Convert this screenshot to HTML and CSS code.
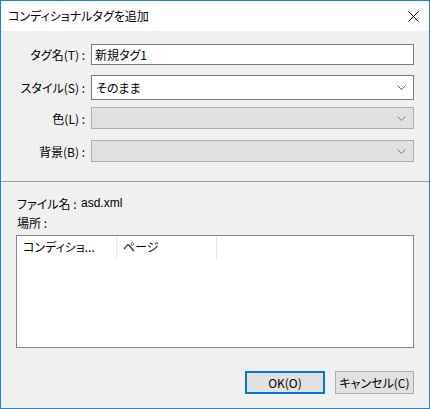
FILE: index.html
```html
<!DOCTYPE html>
<html lang="ja">
<head>
<meta charset="utf-8">
<title>コンディショナルタグを追加</title>
<link rel="stylesheet" href="styles.css">
</head>
<body>
<div class="window">
  <div class="titlebar">
    <span class="title">コンディショナルタグを追加</span>
    <svg class="close" width="11" height="11" viewBox="0 0 11 11"><path d="M0.5 0.5 L10.5 10.5 M10.5 0.5 L0.5 10.5" stroke="#000" stroke-width="1" fill="none"/></svg>
  </div>
  <div class="body">
    <div class="form">
      <div class="row row-name">
        <label class="label">タグ名(T) :</label>
        <div class="field input">新規タグ1</div>
      </div>
      <div class="row row-style">
        <label class="label">スタイル(S) :</label>
        <div class="field select">
          <span class="value">そのまま</span>
          <svg class="chev" width="9" height="5" viewBox="0 0 9 5"><path d="M0.5 0.5 L4.5 4.5 L8.5 0.5" stroke="#5a5a5a" fill="none" stroke-width="1"/></svg>
        </div>
      </div>
      <div class="row row-color">
        <label class="label">色(L) :</label>
        <div class="field select disabled">
          <span class="value"></span>
          <svg class="chev" width="9" height="5" viewBox="0 0 9 5"><path d="M0.5 0.5 L4.5 4.5 L8.5 0.5" stroke="#7a7a7a" fill="none" stroke-width="1"/></svg>
        </div>
      </div>
      <div class="row row-bg">
        <label class="label">背景(B) :</label>
        <div class="field select disabled">
          <span class="value"></span>
          <svg class="chev" width="9" height="5" viewBox="0 0 9 5"><path d="M0.5 0.5 L4.5 4.5 L8.5 0.5" stroke="#7a7a7a" fill="none" stroke-width="1"/></svg>
        </div>
      </div>
    </div>
    <div class="sep"></div>
    <div class="info">
      <div class="info-line"><span class="info-label">ファイル名 :</span><span class="info-value">asd.xml</span></div>
      <div class="info-line"><span class="info-label">場所 :</span></div>
    </div>
    <div class="list">
      <div class="list-head">
        <div class="col col1">コンディショ...</div>
        <div class="col col2">ページ</div>
      </div>
    </div>
    <div class="buttons">
      <button class="btn btn-default">OK(O)</button>
      <button class="btn">キャンセル(C)</button>
    </div>
  </div>
</div>
</body>
</html>
```

FILE: styles.css
```css
* { box-sizing: border-box; }
html, body {
  margin: 0;
  padding: 0;
  background: #f0f0f0;
}
body {
  font-family: "Noto Sans CJK JP", "Noto Sans", sans-serif;
  font-size: 12px;
  color: #000;
  font-feature-settings: "palt";
}
.window {
  width: 430px;
  height: 409px;
  border: 1px solid #1883d7;
  background: #f0f0f0;
  display: flex;
  flex-direction: column;
}
.titlebar {
  height: 30px;
  background: #fff;
  display: flex;
  align-items: center;
  justify-content: space-between;
  padding: 0 10px 0 7px;
  flex: none;
}
.title {
  font-size: 12px;
  line-height: 16px;
  margin-top: -1px;
}
.close {
  display: block;
  margin-top: 0;
}
.body {
  flex: 1;
  display: flex;
  flex-direction: column;
}
.form {
  padding-top: 13px;
}
.row {
  display: flex;
  align-items: center;
}
.label {
  width: 90px;
  padding-right: 6px;
  text-align: right;
  white-space: nowrap;
}
.field {
  width: 323px;
  display: flex;
  align-items: center;
}
.input {
  height: 21px;
  border: 1px solid #7a7a7a;
  background: #fff;
  padding-left: 3px;
}
.select {
  border: 1px solid #7a7a7a;
  background: #fff;
  padding: 0 7px 0 4px;
  justify-content: space-between;
}
.select.disabled {
  border-color: #adadad;
  background: #e1e1e1;
}
.chev { display: block; }
.row-name { height: 21px; }
.row-style { height: 25px; margin-top: 10px; }
.row-style .field { height: 25px; }
.row-color { height: 22px; margin-top: 7px; }
.row-color .field { height: 22px; }
.row-bg { height: 22px; margin-top: 11px; }
.row-bg .field { height: 22px; }
.sep {
  margin-top: 19px;
  height: 1px;
  background: #a0a0a0;
}
.info {
  padding: 12px 0 0 16px;
}
.info-line {
  height: 19px;
  line-height: 19px;
  display: flex;
}
.info-label {
  width: 64px;
}
.info-value {
  font-family: "Liberation Sans", Arial, sans-serif;
}
.list {
  margin: 3px 0 0 15px;
  width: 398px;
  height: 113px;
  border: 1px solid #828790;
  background: #fff;
}
.list-head {
  display: flex;
  height: 24px;
}
.col {
  width: 100px;
  border-right: 1px solid #e5e5e5;
  padding-left: 6px;
  line-height: 22px;
  white-space: nowrap;
  overflow: hidden;
}
.buttons {
  display: flex;
  justify-content: flex-end;
  gap: 10px;
  margin-top: 23px;
  padding-right: 15px;
}
.btn {
  width: 79px;
  height: 23px;
  border: 1px solid #adadad;
  background: #e1e1e1;
  font-family: inherit;
  font-size: 12px;
  font-feature-settings: "palt";
  color: #000;
  padding: 0;
  margin: 0;
}
.btn-default {
  width: 80px;
  border: 2px solid #0078d7;
}
```
